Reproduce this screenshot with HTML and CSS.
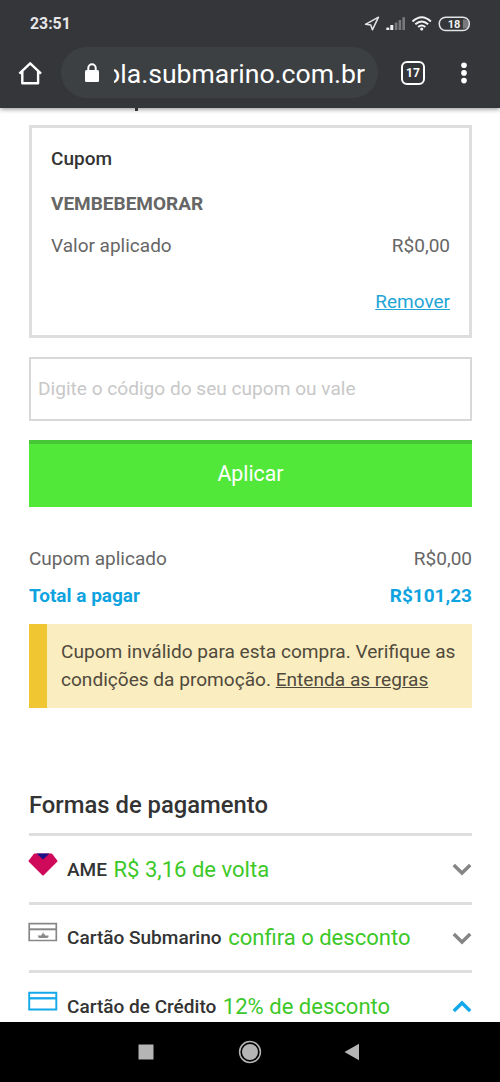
FILE: index.html
```
<!DOCTYPE html>
<html lang="pt-BR">
<head>
  <meta charset="utf-8">
  <title>Submarino - Pagamento</title>
  <link rel="stylesheet" href="styles.css">
</head>
<body>
  <header class="browser">
    <div class="status">
      <span class="clock">23:51</span>
      <svg class="status-icons" width="108" height="20" viewBox="0 0 108 20">
        <path d="M1.500 10.300L14.500 3.200L8.400 15.800L6.800 10.900Z" fill="none" stroke="#e2e3e5" stroke-width="1.500" stroke-linejoin="round"/>
        <g fill="#f1f1f2">
          <rect x="22.300" y="13.600" width="3" height="2.400"/>
          <rect x="26.300" y="11" width="3" height="5"/>
        </g>
        <g fill="#77797c">
          <rect x="30.800" y="8.500" width="2.600" height="7.500"/>
          <rect x="34.600" y="6" width="2.600" height="10"/>
          <rect x="38.400" y="3.200" width="2.600" height="12.800"/>
        </g>
        <g fill="none" stroke="#f1f1f2" stroke-width="2">
          <path d="M48.500 7.400Q57.700 -1 66.900 7.400"/>
          <path d="M51.300 10.300Q57.700 4.600 64.100 10.300"/>
          <path d="M54.100 13Q57.700 10 61.300 13"/>
        </g>
        <circle cx="57.700" cy="15" r="1.600" fill="#f1f1f2"/>
        <path d="M98.800 5.500h2a4 4.500 0 0 1 0 9h-2z" fill="#77797c"/>
        <rect x="75.300" y="3.200" width="30" height="13.400" rx="6.400" fill="none" stroke="#e2e3e5" stroke-width="1.500"/>
        <text class="battery" x="90" y="14" text-anchor="middle">18</text>
      </svg>
    </div>
    <div class="toolbar">
      <svg class="home" width="24" height="24" viewBox="0 0 24 24">
        <path d="M1.400 12.600L12.200 2.300L23 12.600M4.300 10.500V22.300H20.100V10.500" fill="none" stroke="#fff" stroke-width="2.400" stroke-linejoin="round"/>
      </svg>
      <div class="address">
        <svg width="14" height="20" viewBox="0 0 14 20">
          <path d="M3.300 8V5a3.700 3.700 0 0 1 7.400 0v3" fill="none" stroke="#fff" stroke-width="2"/>
          <rect width="14" height="12" y="7" rx="1.500" fill="#fff"/>
        </svg>
        <span class="url"><span>ola.submarino.com.br</span></span>
      </div>
      <span class="tabs">17</span>
      <svg class="menu" width="6" height="22" viewBox="0 0 6 22" fill="#fff">
        <circle cx="3" cy="3.200" r="2.800"/>
        <circle cx="3" cy="10.900" r="2.800"/>
        <circle cx="3" cy="18.600" r="2.800"/>
      </svg>
    </div>
  </header>

  <main class="page">
    <div class="cut-title"></div>
    <section class="coupon">
      <h2>Cupom</h2>
      <p class="code">VEMBEBEMORAR</p>
      <div class="row"><span class="applied">Valor aplicado</span><span class="value">R$0,00</span></div>
      <a class="remove">Remover</a>
    </section>

    <input class="field" type="text" placeholder="Digite o código do seu cupom ou vale">
    <button class="apply"><span>Aplicar</span></button>

    <div class="summary">
      <div class="row"><span class="label">Cupom aplicado</span><span class="value">R$0,00</span></div>
      <div class="row total"><span class="total-label">Total a pagar</span><span class="total-value">R$101,23</span></div>
    </div>

    <div class="alert">
      <span class="line1">Cupom inválido para esta compra. Verifique as</span><br>
      <span class="line2">condições da promoção. <u>Entenda as regras</u></span>
    </div>

    <h1><span>Formas de pagamento</span></h1>
    <ul class="methods">
      <li>
        <svg class="icon" width="30" height="24" viewBox="0 0 30 24">
          <path d="M6.500 1.500H23.500L28.500 8L15 21.500L1.500 8Z" fill="#cf0a5b" stroke="#cf0a5b" stroke-width="2" stroke-linejoin="round"/>
          <path d="M8.500 0.500H21.500L15 6.600Z" fill="#1c1288"/>
        </svg>
        <span class="name">AME</span>
        <span class="offer">R$ 3,16 de volta</span>
        <svg class="arrow" width="20" height="13" viewBox="0 0 20 13"><path d="M1.800 2L10 10L18.200 2"/></svg>
      </li>
      <li>
        <svg class="icon" width="30" height="24" viewBox="0 0 30 24">
          <path d="M1.200 2.700H28.300V19.500H1.200Z" fill="none" stroke="#888" stroke-width="1.700"/>
          <path d="M1.200 8.300H28.300" stroke="#888" stroke-width="2"/>
          <path d="M9.500 14.500H13.500V13.300H14.500V11.500H15.600V13.300H17V14.500H20.500V16L19 17H11Z" fill="#888"/>
        </svg>
        <span class="name">Cartão Submarino</span>
        <span class="offer">confira o desconto</span>
        <svg class="arrow" width="20" height="13" viewBox="0 0 20 13"><path d="M1.800 2L10 10L18.200 2"/></svg>
      </li>
      <li>
        <svg class="icon" width="30" height="24" viewBox="0 0 30 24">
          <path d="M1.200 2.700H28.300V19.500H1.200Z" fill="none" stroke="#12a8ea" stroke-width="1.900"/>
          <path d="M1.200 8.300H28.300" stroke="#12a8ea" stroke-width="2.300"/>
        </svg>
        <span class="name">Cartão de Crédito</span>
        <span class="offer">12% de desconto</span>
        <svg class="arrow open" width="20" height="13" viewBox="0 0 20 13"><path d="M1.800 11L10 3L18.200 11"/></svg>
      </li>
    </ul>
  </main>

  <nav class="android">
    <svg width="16" height="16" viewBox="0 0 16 16"><rect x="0.500" y="0.500" width="15" height="15" fill="#b5b5b5"/></svg>
    <svg width="24" height="24" viewBox="0 0 24 24">
      <circle cx="12" cy="12" r="10.400" fill="none" stroke="#b5b5b5" stroke-width="1.500"/>
      <circle cx="12" cy="12" r="8" fill="#b5b5b5"/>
    </svg>
    <svg width="16" height="18" viewBox="0 0 16 18"><path d="M0.500 9L15 0.800V17.200Z" fill="#b5b5b5"/></svg>
  </nav>
</body>
</html>
```
FILE: styles.css
```
* {
  box-sizing: border-box;
}
body {
  margin: 0;
  height: 1082px;
  display: flex;
  flex-direction: column;
  overflow: hidden;
  background-color: #fff;
  color: #666;
  font-family: Roboto, sans-serif;
  font-size: 19px;
  line-height: 28px;
}
h1, h2, p, ul {
  margin: 0;
  padding: 0;
}

/* browser bar */
.browser {
  flex: none;
  height: 108px;
  background-color: #35363a;
  color: #fff;
  box-shadow: 0 1px 5px rgba(0, 0, 0, 0.45);
}
.status {
  display: flex;
  justify-content: space-between;
  align-items: center;
  height: 47px;
  padding: 0 28px 0 30px;
}
.clock {
  font-size: 15.800px;
  font-weight: 700;
  color: #e6e6e8;
}
.battery {
  font-size: 11px;
  font-weight: 700;
  fill: #f1f1f2;
}
.toolbar {
  display: flex;
  align-items: center;
  height: 51px;
  padding-left: 18px;
}
.address {
  display: flex;
  align-items: center;
  width: 317px;
  height: 51px;
  margin-left: 19px;
  padding-left: 24px;
  border-radius: 26px;
  background-color: #3c4043;
}
.url {
  display: flex;
  justify-content: flex-end;
  width: 251px;
  margin-left: 15px;
  padding-top: 3px;
  overflow: hidden;
  white-space: nowrap;
  font-size: 26.600px;
  line-height: 36px;
}
.tabs {
  width: 24px;
  height: 24px;
  margin-left: 23px;
  border: 2.500px solid #fff;
  border-radius: 6px;
  font-size: 12px;
  font-weight: 700;
  line-height: 20px;
  text-align: center;
}
.menu {
  margin-left: 36px;
}

/* checkout */
.page {
  flex: none;
  height: 914px;
  padding: 0 28px 0 29px;
  overflow: hidden;
}
.cut-title {
  width: 3px;
  height: 3px;
  margin-left: 106px;
  background-color: #333;
}
.row {
  display: flex;
  justify-content: space-between;
}
.coupon {
  height: 213px;
  margin-top: 14px;
  padding: 17px 19px;
  border: 3px solid #dedede;
}
.coupon h2 {
  font-size: 19px;
  font-weight: 500;
  color: #333;
}
.code {
  margin-top: 17px;
  font-weight: 700;
}
.coupon .row {
  margin-top: 14px;
}
.remove {
  display: block;
  width: fit-content;
  margin: 28px 0 0 auto;
  color: #1ea5d5;
  text-decoration: underline;
}
.field {
  display: block;
  width: 443px;
  height: 64px;
  margin-top: 19px;
  padding: 0 8px 2px 7px;
  border: 2px solid #d8d8d8;
  font: inherit;
  font-size: 19.100px;
}
.field::placeholder {
  color: #c8c8c8;
}
.apply {
  display: block;
  width: 443px;
  height: 67px;
  margin-top: 19px;
  padding: 0 0 4px;
  border: 0;
  border-top: 4px solid #45c736;
  background-color: #52e83a;
  color: #fff;
  font: inherit;
  font-size: 21.300px;
}
.summary {
  margin-top: 38px;
}
.total {
  margin-top: 9px;
  color: #0fa3e0;
  font-weight: 700;
}
.alert {
  height: 84px;
  margin-top: 14px;
  padding: 14px 0 0 14px;
  border-left: 18px solid #f0c632;
  background-color: #faedc0;
  color: #504a3c;
  font-size: 19.080px;
  line-height: 28px;
  white-space: nowrap;
}
h1 {
  margin-top: 80px;
  padding-bottom: 11px;
  color: #333;
  font-size: 23.800px;
  font-weight: 500;
  line-height: 34px;
}
.methods {
  list-style: none;
}
.methods li {
  display: flex;
  align-items: center;
  height: 68.500px;
  padding-top: 2px;
  border-top: 3px solid #dedede;
  white-space: nowrap;
}
.icon {
  flex: none;
  margin: -10px 9px 0 -1px;
}
.name {
  color: #333;
  font-size: 19.050px;
  font-weight: 500;
}
.offer {
  margin-left: 6.500px;
  color: #3cc828;
  font-size: 22.050px;
}
.arrow {
  margin-left: auto;
  fill: none;
  stroke: #858585;
  stroke-width: 3.400;
}
.arrow.open {
  stroke: #12a8ea;
}

/* system buttons */
.android {
  flex: none;
  display: flex;
  justify-content: center;
  align-items: center;
  gap: 84px;
  height: 60px;
  background-color: #000;
}
.android svg:last-child {
  margin-left: -2px;
  margin-right: 2px;
}
```
